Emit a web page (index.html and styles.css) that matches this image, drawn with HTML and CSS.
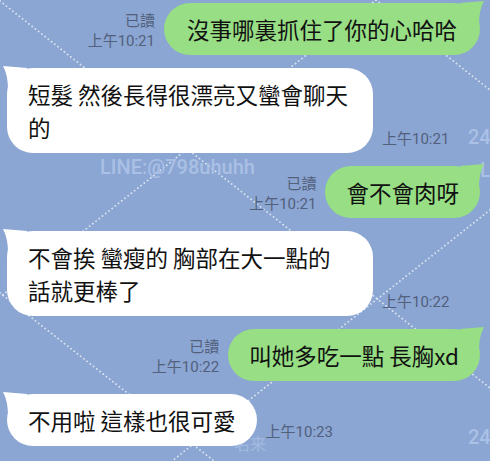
FILE: index.html
```html
<!DOCTYPE html>
<html lang="zh-Hant">
  <head>
    <meta charset="UTF-8" />
    <meta name="viewport" content="width=device-width, initial-scale=1.0" />
    <title>LINE</title>
    <link rel="stylesheet" href="styles.css">
  </head>
  <body>
    <div class="screen">
      <!-- background pattern + watermark -->
      <svg class="pattern" width="490" height="461" viewBox="0 0 490 461">
        <g stroke="#fff" stroke-width="1.8" stroke-linecap="round" stroke-dasharray="0.1 4" stroke-opacity="0.7" fill="none">
          <line x1="0" y1="1" x2="490" y2="388" />
          <line x1="376" y1="0" x2="0" y2="297" />
          <line x1="0" y1="293" x2="214" y2="461" />
          <line x1="490" y1="210" x2="172" y2="461" />
          <line x1="376" y1="0" x2="490" y2="90" />
        </g>
      </svg>
      <span class="wm wm-line">LINE:@798uhuhh</span>
      <span class="wm wm-line2">L</span>
      <span class="wm wm-24a">24</span>
      <span class="wm wm-24b">24</span>
      <span class="wm wm-faint">名来</span>

      <div class="chat">
        <div class="row me">
          <div class="meta"><div>已讀</div><div>上午10:21</div></div>
          <div class="bubble first">沒事哪裏抓住了你的心哈哈</div>
        </div>

        <div class="row you">
          <div class="bubble wide">短髮 然後長得很漂亮又蠻會聊天<br>的</div>
          <div class="meta"><div>上午10:21</div></div>
        </div>

        <div class="row me">
          <div class="meta"><div>已讀</div><div>上午10:21</div></div>
          <div class="bubble">會不會肉呀</div>
        </div>

        <div class="row you">
          <div class="bubble wide">不會挨 蠻瘦的 胸部在大一點的<br>話就更棒了</div>
          <div class="meta"><div>上午10:22</div></div>
        </div>

        <div class="row me">
          <div class="meta"><div>已讀</div><div>上午10:22</div></div>
          <div class="bubble">叫她多吃一點 長胸xd</div>
        </div>

        <div class="row you">
          <div class="bubble">不用啦 這樣也很可愛</div>
          <div class="meta"><div>上午10:23</div></div>
        </div>
      </div>
    </div>
  </body>
</html>
```

FILE: styles.css
```css
body {
  margin: 0;
  background-color: #8ba6d3;
  font-family: "Noto Sans CJK TC", "Noto Sans", sans-serif;
}

.screen {
  position: relative;
  width: 490px;
  height: 461px;
  overflow: hidden;
}

.pattern {
  position: absolute;
  left: 0;
  top: 0;
}

.wm {
  position: absolute;
  font-family: Roboto, "Noto Sans CJK TC", sans-serif;
  font-weight: 500;
  font-size: 20px;
  line-height: 20px;
  color: #aac0e5;
}

.wm-line {
  left: 100px;
  top: 157px;
}

.wm-line2 {
  left: 480px;
  top: 160px;
}

.wm-24a {
  left: 468px;
  top: 127px;
}

.wm-24b {
  left: 468px;
  top: 427px;
}

.wm-faint {
  left: 234px;
  top: 433px;
  font-family: "Noto Sans CJK TC", sans-serif;
  font-size: 16px;
  color: #a0b7de;
}

.chat {
  position: relative;
  display: flex;
  flex-direction: column;
  gap: 13px;
  padding: 3px 10px 0 7px;
}

.row {
  display: flex;
  align-items: flex-end;
  gap: 9px;
}

.row.me {
  justify-content: flex-end;
}

.bubble {
  position: relative;
  font-size: 22.5px;
  line-height: 33px;
  color: #111;
  padding: 9.5px 21px;
  border-radius: 26px;
}

.bubble.wide {
  width: 324px;
}

.me .bubble {
  background-color: #97de84;
}

.me .bubble.first {
  padding: 9.5px 23px;
}

.you .bubble {
  background-color: #fff;
}

/* little tails at the top corner */
.bubble::before {
  content: "";
  position: absolute;
  top: -2px;
  width: 24px;
  height: 24px;
}

.me .bubble::before {
  right: -4px;
  background-color: #97de84;
  clip-path: path("M0 2 L24 0 Q19 9 19 24 L0 24 Z");
}

.you .bubble::before {
  left: -4px;
  background-color: #fff;
  clip-path: path("M24 2 L0 0 Q5 9 5 24 L24 24 Z");
}

.meta {
  font-family: Roboto, "Noto Sans CJK TC", sans-serif;
  font-size: 15px;
  line-height: 20px;
  color: #52607c;
  padding-bottom: 4px;
  white-space: nowrap;
}

.me .meta {
  text-align: right;
}
```
